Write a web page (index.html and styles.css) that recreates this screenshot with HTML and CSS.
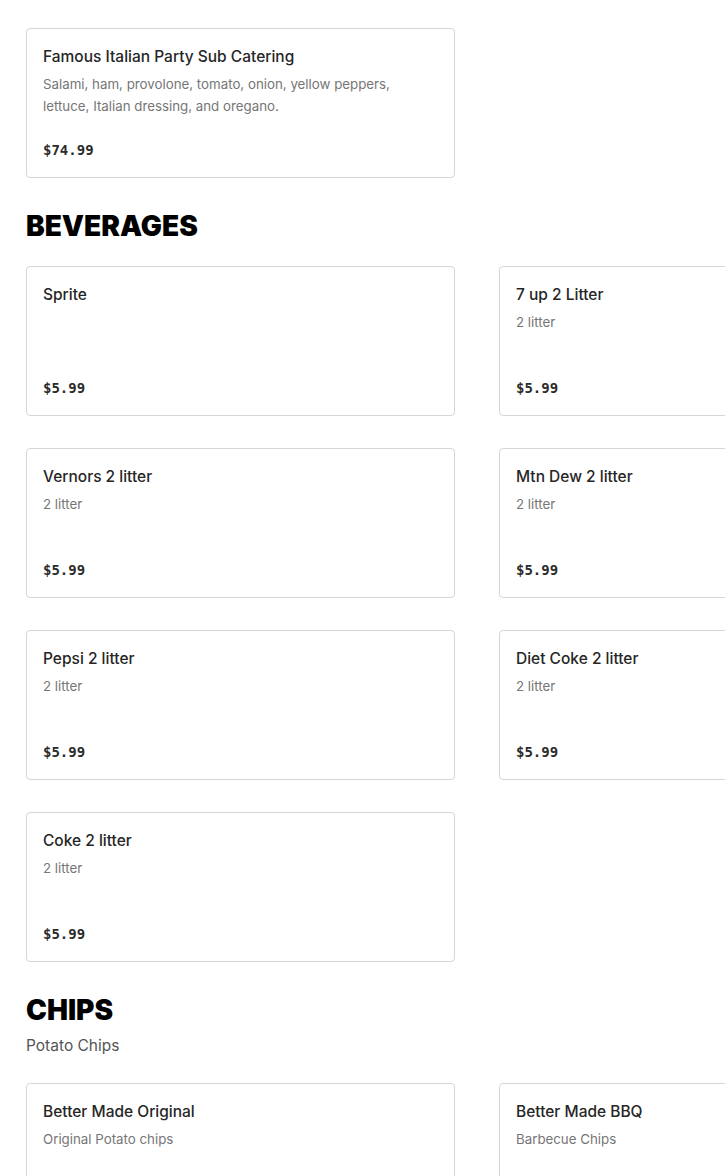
FILE: index.html
```html
<!DOCTYPE html>
<html lang="en">
<head>
<meta charset="utf-8">
<title>Menu</title>
<link rel="stylesheet" href="styles.css">
</head>
<body>
<div class="page">
  <section class="section section-first">
    <div class="grid">
      <div class="card">
        <div class="title">Famous Italian Party Sub Catering</div>
        <div class="desc">Salami, ham, provolone, tomato, onion, yellow peppers, lettuce, Italian dressing, and oregano.</div>
        <div class="price">$74.99</div>
      </div>
    </div>
  </section>

  <section class="section">
    <h2 class="heading">BEVERAGES</h2>
    <div class="grid">
      <div class="card">
        <div class="title">Sprite</div>
        <div class="price">$5.99</div>
      </div>
      <div class="card">
        <div class="title">7 up 2 Litter</div>
        <div class="desc">2 litter</div>
        <div class="price">$5.99</div>
      </div>
      <div class="card">
        <div class="title">Vernors 2 litter</div>
        <div class="desc">2 litter</div>
        <div class="price">$5.99</div>
      </div>
      <div class="card">
        <div class="title">Mtn Dew 2 litter</div>
        <div class="desc">2 litter</div>
        <div class="price">$5.99</div>
      </div>
      <div class="card">
        <div class="title">Pepsi 2 litter</div>
        <div class="desc">2 litter</div>
        <div class="price">$5.99</div>
      </div>
      <div class="card">
        <div class="title">Diet Coke 2 litter</div>
        <div class="desc">2 litter</div>
        <div class="price">$5.99</div>
      </div>
      <div class="card">
        <div class="title">Coke 2 litter</div>
        <div class="desc">2 litter</div>
        <div class="price">$5.99</div>
      </div>
    </div>
  </section>

  <section class="section">
    <h2 class="heading">CHIPS</h2>
    <p class="section-desc">Potato Chips</p>
    <div class="grid">
      <div class="card">
        <div class="title">Better Made Original</div>
        <div class="desc">Original Potato chips</div>
      </div>
      <div class="card">
        <div class="title">Better Made BBQ</div>
        <div class="desc">Barbecue Chips</div>
      </div>
    </div>
  </section>
</div>
</body>
</html>
```

FILE: styles.css
```css
html, body {
  margin: 0;
  padding: 0;
  background: #ffffff;
}

body {
  font-family: Inter, "Noto Sans", sans-serif;
  color: #2b2b2b;
  overflow: hidden;
}

.page {
  width: 725px;
  height: 1176px;
  overflow: hidden;
  padding: 28px 0 0 26px;
  box-sizing: border-box;
}

.section {
  margin-top: 30px;
}

.section-first {
  margin-top: 0;
}

.heading {
  margin: 0 0 22px 0;
  font-family: Inter, sans-serif;
  font-weight: 900;
  font-size: 28px;
  line-height: 36px;
  color: #000000;
  letter-spacing: 0;
}

.section-desc {
  margin: -16px 0 25px 0;
  font-size: 15.5px;
  line-height: 24px;
  color: #555555;
}

.grid {
  display: grid;
  grid-template-columns: 429px 429px;
  column-gap: 44px;
  row-gap: 32px;
  width: 902px;
}

.card {
  box-sizing: border-box;
  min-height: 150px;
  border: 1px solid #d6d6d6;
  border-radius: 4px;
  padding: 16px 16px 17px 16px;
  display: flex;
  flex-direction: column;
  background: #fff;
}

.title {
  font-size: 15.5px;
  line-height: 24px;
  font-weight: 500;
  color: #262626;
}

.desc {
  margin-top: 4px;
  font-size: 13.3px;
  line-height: 22px;
  color: #767676;
}

.price {
  margin-top: auto;
  padding-top: 23px;
  font-family: "DejaVu Sans Mono", "Liberation Mono", monospace;
  font-weight: bold;
  font-size: 14px;
  line-height: 20px;
  color: #2b2b2b;
}
```
